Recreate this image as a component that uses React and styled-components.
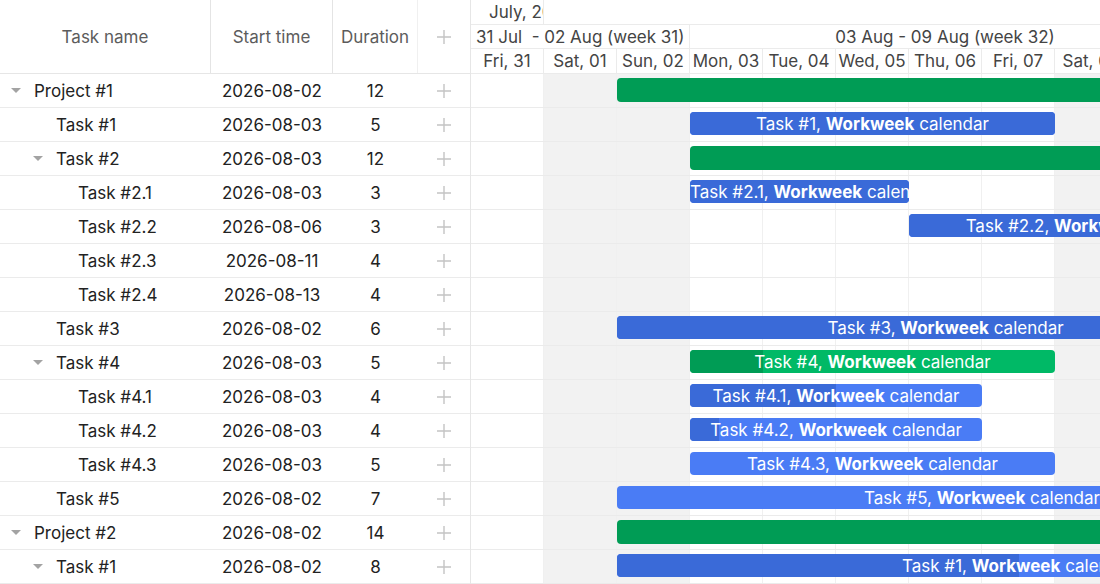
import React from "react";
import styled, { createGlobalStyle, css } from "styled-components";

const COL = 73;

const GlobalStyle = createGlobalStyle`
  html, body {
    margin: 0;
    padding: 0;
    background: #fff;
    font-family: Inter, "Noto Sans", "Liberation Sans", sans-serif;
    font-size: 17px;
    color: #222;
  }
`;

const Page = styled.div`
  display: flex;
  width: 1100px;
  height: 584px;
  overflow: hidden;
`;

const Grid = styled.div`
  width: 471px;
  flex: none;
  border-right: 1px solid #e6e6e6;
  box-sizing: border-box;
`;

const GridHeader = styled.div`
  display: grid;
  grid-template-columns: 211px 122px 85px 1fr;
  height: 74px;
  box-sizing: border-box;
  border-bottom: 1px solid #e6e6e6;
  color: #5c5c5c;
`;

const HeadCell = styled.div`
  display: flex;
  align-items: center;
  justify-content: center;
  padding-top: 1px;
  border-right: ${(p) => (p.$last ? "none" : p.$faint ? "1px solid #f0f0f0" : "1px solid #e4e4e4")};
`;

const GridRow = styled.div`
  display: grid;
  grid-template-columns: 211px 122px 85px 1fr;
  height: 34px;
  box-sizing: border-box;
  border-bottom: 1px solid #ebebeb;
  align-items: center;
`;

const NameCell = styled.div`
  display: flex;
  align-items: center;
  padding-left: ${(p) => 10 + p.$level * 22}px;
  white-space: nowrap;
`;

const Toggle = styled.span`
  width: 12px;
  height: 12px;
  margin-right: 12px;
  display: inline-flex;
  align-items: center;
  justify-content: center;
  &::before {
    content: "";
    border-left: 5px solid transparent;
    border-right: 5px solid transparent;
    border-top: 5px solid #a3a3a3;
  }
`;

const Spacer = styled.span`
  width: 24px;
  flex: none;
`;

const Cell = styled.div`
  text-align: center;
  white-space: nowrap;
`;

const AddCell = styled.div`
  display: flex;
  align-items: center;
  justify-content: center;
`;

const Plus = () => (
  <svg width="16" height="16" viewBox="0 0 16 16">
    <path d="M8 1v14M1 8h14" stroke="#c4c4c4" strokeWidth="1.4" fill="none" />
  </svg>
);

const Chart = styled.div`
  flex: 1;
  overflow: hidden;
  position: relative;
`;

const ScaleRow = styled.div`
  display: flex;
  height: ${(p) => p.$h}px;
  box-sizing: border-box;
  border-bottom: 1px solid #ebebeb;
  color: #444;
`;

const ScaleCell = styled.div`
  flex: none;
  width: ${(p) => p.$span * COL}px;
  box-sizing: border-box;
  border-right: ${(p) => (p.$noLine ? "none" : "1px solid #ebebeb")};
  display: flex;
  align-items: center;
  justify-content: ${(p) => (p.$left ? "flex-start" : "center")};
  padding-left: ${(p) => p.$pad || 0}px;
  white-space: nowrap;
  overflow: hidden;
`;

const ChartRow = styled.div`
  display: flex;
  position: relative;
  height: 34px;
  box-sizing: border-box;
  border-bottom: 1px solid #ebebeb;
`;

const DayCell = styled.div`
  flex: none;
  width: ${COL}px;
  box-sizing: border-box;
  border-right: 1px solid #f0f0f0;
  background: ${(p) => (p.$weekend ? "#f2f2f2" : "#fff")};
`;

const barColors = {
  task: { base: "#4a7cf5", done: "#3a6ad8" },
  parent: { base: "#00b966", done: "#009c55" },
  project: { base: "#009c55", done: "#009c55" },
};

const Bar = styled.div`
  position: absolute;
  top: 4px;
  height: 23px;
  border-radius: 4px;
  overflow: hidden;
  background: ${(p) => barColors[p.$type].base};
  color: #fff;
  font-size: 17px;
  line-height: 25px;
  ${(p) =>
    p.$type === "project" &&
    css`
      height: 24px;
    `}
`;

const Progress = styled.div`
  position: absolute;
  left: 0;
  top: 0;
  bottom: 0;
  background: ${(p) => barColors[p.$type].done};
`;

const BarText = styled.div`
  position: relative;
  text-align: center;
  white-space: nowrap;
  b {
    font-weight: 700;
  }
`;

const days = ["Fri, 31", "Sat, 01", "Sun, 02", "Mon, 03", "Tue, 04", "Wed, 05", "Thu, 06", "Fri, 07", "Sat, 08", "Sun, 09", "Mon, 10", "Tue, 11"];
const weekend = [1, 2, 8, 9];

const rows = [
  { name: "Project #1", level: 0, open: true, start: "2026-08-02", dur: 12, bar: { type: "project", col: 2, span: 14 } },
  { name: "Task #1", level: 1, start: "2026-08-03", dur: 5, bar: { type: "task", col: 3, span: 5, progress: 1, text: "Task #1" } },
  { name: "Task #2", level: 1, open: true, start: "2026-08-03", dur: 12, bar: { type: "project", col: 3, span: 14 } },
  { name: "Task #2.1", level: 2, start: "2026-08-03", dur: 3, bar: { type: "task", col: 3, span: 3, progress: 1, text: "Task #2.1" } },
  { name: "Task #2.2", level: 2, start: "2026-08-06", dur: 3, bar: { type: "task", col: 6, span: 5, progress: 1, text: "Task #2.2" } },
  { name: "Task #2.3", level: 2, start: "2026-08-11", dur: 4 },
  { name: "Task #2.4", level: 2, start: "2026-08-13", dur: 4 },
  { name: "Task #3", level: 1, start: "2026-08-02", dur: 6, bar: { type: "task", col: 2, span: 9, progress: 1, text: "Task #3" } },
  { name: "Task #4", level: 1, open: true, start: "2026-08-03", dur: 5, bar: { type: "parent", col: 3, span: 5, progress: 0.2, text: "Task #4" } },
  { name: "Task #4.1", level: 2, start: "2026-08-03", dur: 4, bar: { type: "task", col: 3, span: 4, progress: 0.5, text: "Task #4.1" } },
  { name: "Task #4.2", level: 2, start: "2026-08-03", dur: 4, bar: { type: "task", col: 3, span: 4, progress: 0.1, text: "Task #4.2" } },
  { name: "Task #4.3", level: 2, start: "2026-08-03", dur: 5, bar: { type: "task", col: 3, span: 5, progress: 0, text: "Task #4.3" } },
  { name: "Task #5", level: 1, start: "2026-08-02", dur: 7, bar: { type: "task", col: 2, span: 10, progress: 0, text: "Task #5" } },
  { name: "Project #2", level: 0, open: true, start: "2026-08-02", dur: 14, bar: { type: "project", col: 2, span: 14 } },
  { name: "Task #1", level: 1, open: true, start: "2026-08-02", dur: 8, bar: { type: "task", col: 2, span: 11, progress: 0.5, text: "Task #1" } },
];

export default function App() {
  return (
    <>
      <GlobalStyle />
      <Page>
        <Grid>
          <GridHeader>
            <HeadCell>Task name</HeadCell>
            <HeadCell>Start time</HeadCell>
            <HeadCell $faint>Duration</HeadCell>
            <HeadCell $last>
              <Plus />
            </HeadCell>
          </GridHeader>
          {rows.map((r, i) => (
            <GridRow key={i}>
              <NameCell $level={r.level}>
                {r.open ? <Toggle /> : <Spacer />}
                {r.name}
              </NameCell>
              <Cell>{r.start}</Cell>
              <Cell>{r.dur}</Cell>
              <AddCell>
                <Plus />
              </AddCell>
            </GridRow>
          ))}
        </Grid>
        <Chart>
          <ScaleRow $h={25}>
            <ScaleCell $span={1} $pad={18} $left>
              July, 2026
            </ScaleCell>
            <ScaleCell $span={11} $noLine />
          </ScaleRow>
          <ScaleRow $h={24}>
            <ScaleCell $span={3} $pad={5} $left>
              31 Jul&nbsp; - 02 Aug (week 31)
            </ScaleCell>
            <ScaleCell $span={7}>03 Aug - 09 Aug (week 32)</ScaleCell>
            <ScaleCell $span={2} $noLine />
          </ScaleRow>
          <ScaleRow $h={25}>
            {days.map((d) => (
              <ScaleCell key={d} $span={1}>
                {d}
              </ScaleCell>
            ))}
          </ScaleRow>
          {rows.map((r, i) => (
            <ChartRow key={i}>
              {days.map((d, j) => (
                <DayCell key={d} $weekend={weekend.includes(j)} />
              ))}
              {r.bar && (
                <Bar
                  $type={r.bar.type}
                  style={{ left: r.bar.col * COL, width: r.bar.span * COL }}
                >
                  {r.bar.type !== "project" && (
                    <Progress $type={r.bar.type} style={{ width: `${r.bar.progress * 100}%` }} />
                  )}
                  {r.bar.text && (
                    <BarText>
                      {r.bar.text}, <b>Workweek</b> calendar
                    </BarText>
                  )}
                </Bar>
              )}
            </ChartRow>
          ))}
        </Chart>
      </Page>
    </>
  );
}
